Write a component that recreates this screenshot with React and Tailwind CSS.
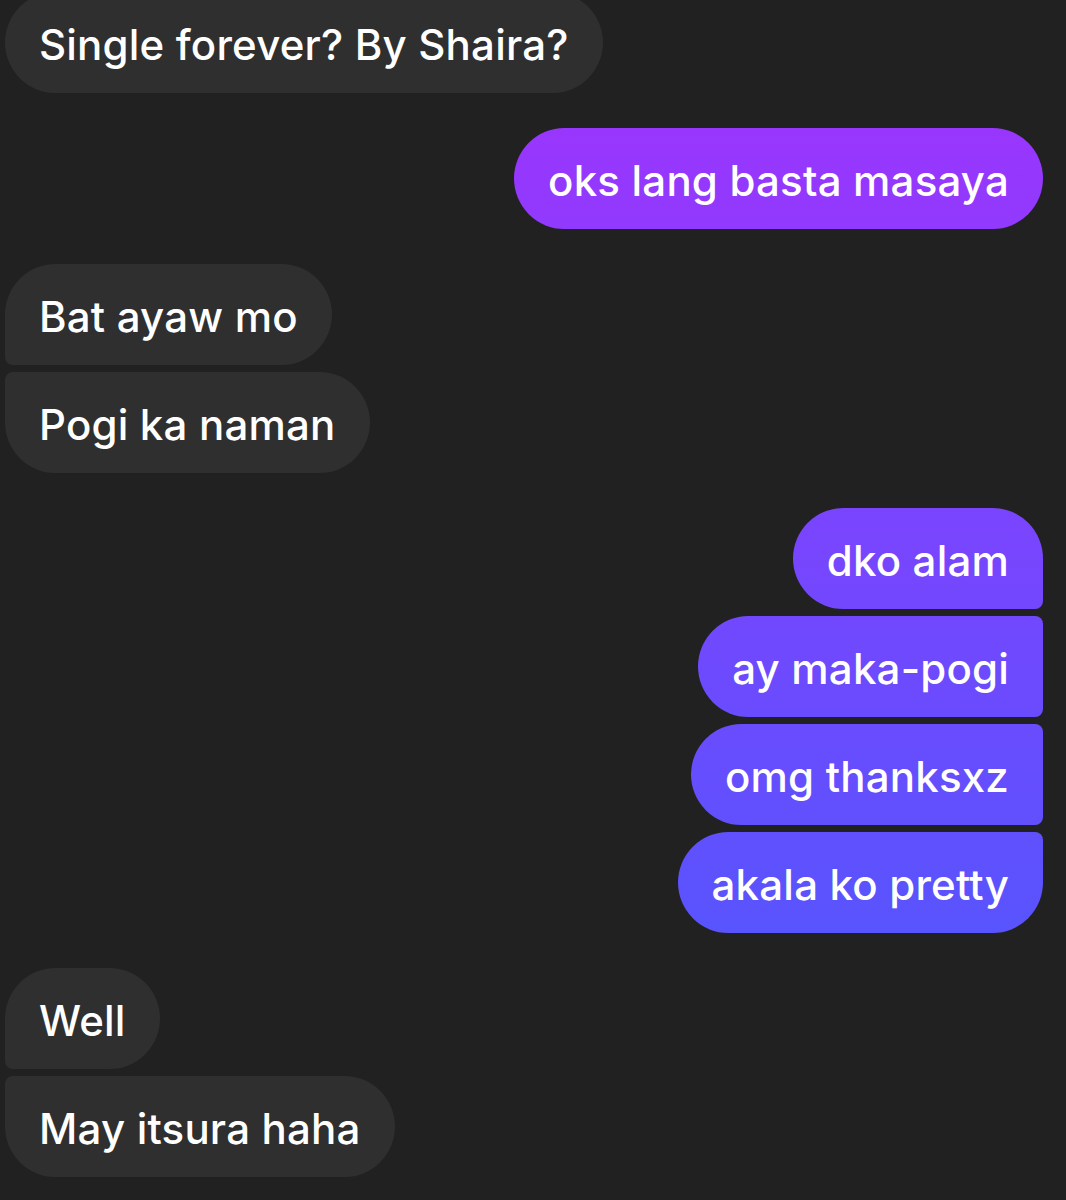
const font = { fontFamily: "Inter, 'Noto Sans', sans-serif" };

const groups = [
  { side: "in", items: ["Single forever? By Shaira?"], first: "-mt-[8px]" },
  { side: "out", items: ["oks lang basta masaya"] },
  { side: "in", items: ["Bat ayaw mo", "Pogi ka naman"] },
  { side: "out", items: ["dko alam", "ay maka-pogi", "omg thanksxz", "akala ko pretty"] },
  { side: "in", items: ["Well", "May itsura haha"] },
];

function cornerClass(side, i, n) {
  if (n === 1) return "rounded-[51px]";
  const first = i === 0;
  const last = i === n - 1;
  if (side === "in") {
    if (first) return "rounded-[51px] rounded-bl-[8px]";
    if (last) return "rounded-[51px] rounded-tl-[8px]";
    return "rounded-[51px] rounded-l-[8px]";
  }
  if (first) return "rounded-[51px] rounded-br-[8px]";
  if (last) return "rounded-[51px] rounded-tr-[8px]";
  return "rounded-[51px] rounded-r-[8px]";
}

function Bubble({ side, text, corners }) {
  const color =
    side === "in"
      ? "bg-[#2f2f2f]"
      : "bg-[linear-gradient(to_bottom,#a331fd,#435efd)] bg-fixed";
  return (
    <div
      className={`flex h-[101px] items-center px-[34px] pt-[4px] text-[42px] font-medium tracking-[0.2px] text-white ${color} ${corners}`}
    >
      {text}
    </div>
  );
}

export default function App() {
  return (
    <div
      className="h-[1200px] w-[1066px] overflow-hidden bg-[#212121] pl-[5px] pr-[23px]"
      style={font}
    >
      <div className="flex flex-col gap-[35px]">
        {groups.map((g, gi) => (
          <div
            key={gi}
            className={`flex flex-col gap-[7px] ${g.side === "in" ? "items-start" : "items-end"} ${g.first || ""}`}
          >
            {g.items.map((t, i) => (
              <Bubble
                key={t}
                side={g.side}
                text={t}
                corners={cornerClass(g.side, i, g.items.length)}
              />
            ))}
          </div>
        ))}
      </div>
    </div>
  );
}
